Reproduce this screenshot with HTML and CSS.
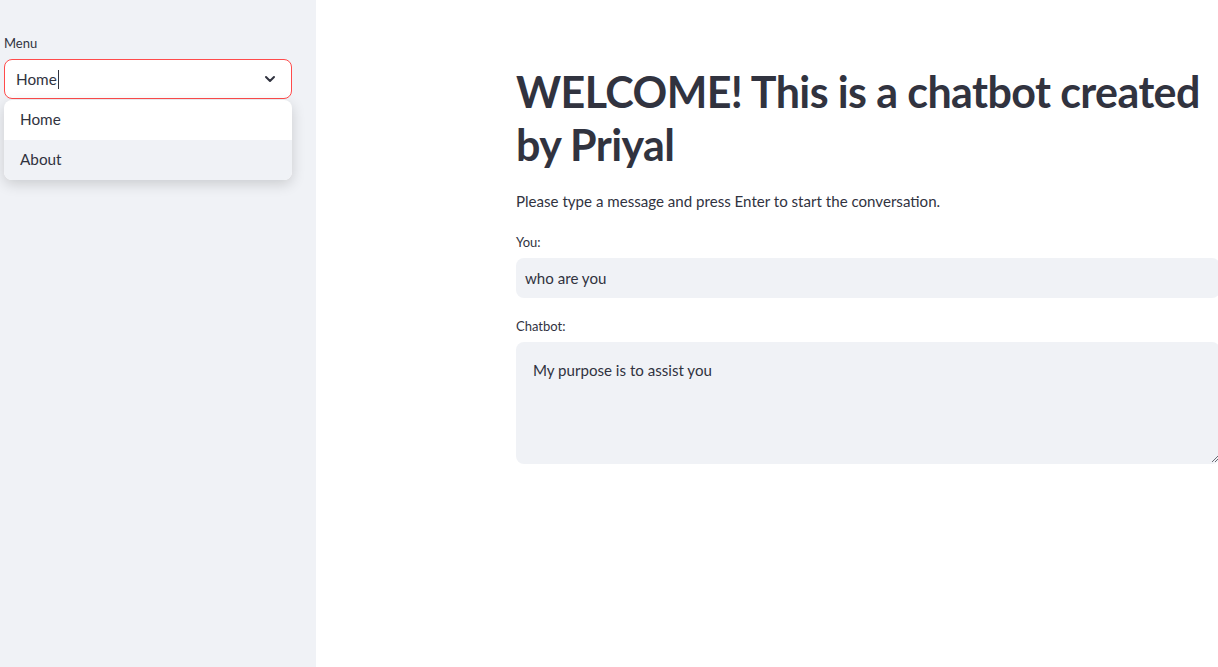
FILE: index.html
```html
<!DOCTYPE html>
<html>
<head>
<meta charset="utf-8">
<link rel="stylesheet" href="styles.css">
</head>
<body>
<div class="app">
  <aside class="sidebar">
    <div class="field">
      <label class="label">Menu</label>
      <div class="select-wrap">
        <div class="select">
          <span class="select-value">Home<span class="caret"></span></span>
          <svg class="chevron" width="16" height="16" viewBox="0 0 24 24"><path d="M6 9l6 6 6-6" fill="none" stroke="#31333f" stroke-width="3" stroke-linecap="round" stroke-linejoin="round"/></svg>
        </div>
        <ul class="menu">
          <li class="option">Home</li>
          <li class="option hover">About</li>
        </ul>
      </div>
    </div>
  </aside>
  <main class="main">
    <div class="block">
      <h1 class="title">WELCOME! This is a chatbot created by Priyal</h1>
      <p class="intro">Please type a message and press Enter to start the conversation.</p>
      <label class="label main-label">You:</label>
      <div class="input">who are you</div>
      <label class="label main-label second">Chatbot:</label>
      <div class="textarea">My purpose is to assist you
        <svg class="grip" width="10" height="10" viewBox="0 0 10 10"><path d="M9 3L3 9M9 6L6 9" stroke="#6b6d76" stroke-width="1"/></svg>
      </div>
    </div>
  </main>
</div>
</body>
</html>
```

FILE: styles.css
```css
* { box-sizing: border-box; }
html, body { margin: 0; padding: 0; }
body {
  font-family: "Source Sans Pro", Lato, "Liberation Sans", sans-serif;
  color: #31333f;
  background: #fff;
  width: 1218px;
  height: 667px;
  overflow: hidden;
}
.app { display: flex; height: 667px; }
.sidebar {
  width: 316px;
  flex: none;
  background: #f0f2f6;
  padding: 33px 24px 0 4px;
}
.label {
  display: block;
  font-size: 13px;
  line-height: 20px;
  color: #31333f;
}
.field .label { margin-bottom: 6px; }
.select-wrap { position: relative; }
.select {
  height: 40px;
  background: #fff;
  border: 1px solid #ff4b4b;
  border-radius: 8px;
  display: flex;
  align-items: center;
  justify-content: space-between;
  padding: 0 13px 0 11px;
  font-size: 15.3px;
}
.caret {
  display: inline-block;
  width: 1px;
  height: 19px;
  background: #31333f;
  vertical-align: -4px;
  margin-left: 1px;
}
.menu {
  position: absolute;
  left: 0; right: 0;
  top: 41px;
  margin: 0;
  padding: 0;
  list-style: none;
  background: #fff;
  border-radius: 8px;
  overflow: hidden;
  box-shadow: 0 4px 14px rgba(0,0,0,0.16);
}
.option {
  height: 40px;
  line-height: 39px;
  padding-left: 16px;
  font-size: 15.3px;
}
.option.hover { background: #f0f2f6; }
.main { flex: 1; min-width: 0; padding: 65px 0 0 200px; }
.block { width: 704px; display: flex; flex-direction: column; }
.title {
  margin: 0;
  font-size: 43px;
  font-weight: 700;
  line-height: 53px;
  letter-spacing: -0.6px;
}
.intro {
  margin: 18px 0 0;
  font-size: 15.1px;
  line-height: 24px;
}
.main-label { margin-top: 19px; margin-bottom: 6px; }
.main-label.second { margin-top: 18px; }
.input {
  height: 40px;
  background: #f0f2f6;
  border-radius: 8px;
  padding: 0 9px;
  display: flex;
  align-items: center;
  font-size: 15.1px;
}
.textarea {
  position: relative;
  height: 122px;
  background: #f0f2f6;
  border-radius: 8px;
  padding: 16px 17px;
  font-size: 15.1px;
  line-height: 24px;
}
.grip { position: absolute; right: 1px; bottom: 1px; }
```
